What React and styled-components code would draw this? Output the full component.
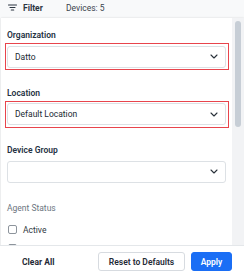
import React from "react";
import styled, { createGlobalStyle } from "styled-components";

const Global = createGlobalStyle`
  html, body { margin: 0; padding: 0; background: #f8f9fa; }
  body { font-family: Roboto, "Liberation Sans", Arial, sans-serif; }
  * { box-sizing: border-box; }
`;

const Root = styled.div`
  width: 244px;
  height: 274px;
  display: flex;
  flex-direction: column;
  overflow: hidden;
  background: #f8f9fa;
`;

const Header = styled.div`
  height: 18px;
  flex: none;
  display: flex;
  align-items: center;
  padding: 0 0 3px 8px;
  color: #2b3440;
  font-size: 8.5px;
`;

const FilterTitle = styled.span`
  display: flex;
  align-items: center;
  gap: 6px;
  font-weight: 700;
  width: 58px;
`;

const Devices = styled.span`
  font-weight: 400;
  color: #3a434d;
`;

const Panel = styled.div`
  flex: 1;
  min-height: 0;
  margin-left: 1px;
  background: #fff;
  box-shadow: 0 0 2px rgba(0, 0, 0, 0.14);
  display: flex;
  flex-direction: column;
`;

const ScrollArea = styled.div`
  flex: 1;
  min-height: 0;
  display: flex;
`;

const Content = styled.div`
  flex: 1;
  overflow: hidden;
  padding: 12px 6px 0 6px;
  display: flex;
  flex-direction: column;
`;

const Track = styled.div`
  width: 12px;
  flex: none;
  background: #f2f3f5;
  padding: 3px 3px 0 3px;
`;

const Thumb = styled.div`
  width: 6px;
  height: 106px;
  border-radius: 3px;
  background: #c7ced6;
`;

const Field = styled.div`
  display: flex;
  flex-direction: column;
  margin-bottom: 20px;
`;

const Label = styled.div`
  font-size: 8.5px;
  line-height: 11px;
  font-weight: 600;
  color: #243142;
  margin-bottom: 4.5px;
`;

const Select = styled.div`
  position: relative;
  height: 22px;
  display: flex;
  align-items: center;
  justify-content: space-between;
  padding: 0 7px 0 7px;
  border: 1px solid #dde1e5;
  border-radius: 3px;
  background: #fff;
  font-size: 8.5px;
  color: #222a33;

  &::after {
    content: "";
    display: ${(p) => (p.$highlight ? "block" : "none")};
    position: absolute;
    inset: -3.5px;
    border: 1.5px solid #e8444c;
    pointer-events: none;
  }
`;

const Section = styled.div`
  font-size: 8.5px;
  line-height: 11px;
  color: #6c7681;
  margin-bottom: 11px;
`;

const CheckRow = styled.label`
  display: flex;
  align-items: center;
  gap: 6px;
  height: 11px;
  margin-bottom: 9px;
  font-size: 8.5px;
  color: #2f3740;
  padding-left: 1px;
`;

const Box = styled.span`
  width: 9px;
  height: 9px;
  border: 1px solid #8d949c;
  border-radius: 2px;
  background: #fff;
`;

const Footer = styled.div`
  height: 29px;
  flex: none;
  display: flex;
  align-items: flex-start;
  padding: 6px 12px 0 0;
  border-top: 1px solid #e4e7ea;
  background: #fff;
  margin-left: -1px;
  gap: 6px;
`;

const TextButton = styled.button`
  margin: 0 auto 0 22px;
  height: 19px;
  padding: 0;
  border: none;
  background: none;
  font-family: inherit;
  font-size: 8.5px;
  font-weight: 700;
  color: #1f2a36;
`;

const Button = styled.button`
  height: 19px;
  width: ${(p) => p.$w}px;
  border-radius: 3px;
  font-family: inherit;
  font-size: 8.5px;
  font-weight: 600;
  padding: 0;
  border: 1px solid ${(p) => (p.$primary ? "#1a6ef5" : "#d7dbe0")};
  background: ${(p) => (p.$primary ? "#1a6ef5" : "#fff")};
  color: ${(p) => (p.$primary ? "#fff" : "#1f2a36")};
`;

const Chevron = () => (
  <svg width="8" height="5" viewBox="0 0 8 5" fill="none">
    <path d="M1 1 L4 4 L7 1" stroke="#2a323b" strokeWidth="1.1" strokeLinecap="round" strokeLinejoin="round" />
  </svg>
);

const FilterIcon = () => (
  <svg width="9" height="7" viewBox="0 0 9 7" fill="none">
    <path d="M0.5 1 H8.5 M2 3.5 H7 M3.3 6 H5.7" stroke="#2b3440" strokeWidth="1.1" strokeLinecap="round" />
  </svg>
);

const SelectField = ({ label, value, highlight }) => (
  <Field>
    <Label>{label}</Label>
    <Select $highlight={highlight}>
      <span>{value}</span>
      <Chevron />
    </Select>
  </Field>
);

export default function App() {
  return (
    <Root>
      <Global />
      <Header>
        <FilterTitle>
          <FilterIcon />
          Filter
        </FilterTitle>
        <Devices>Devices: 5</Devices>
      </Header>
      <Panel>
        <ScrollArea>
          <Content>
            <SelectField label="Organization" value="Datto" highlight />
            <SelectField label="Location" value="Default Location" highlight />
            <SelectField label="Device Group" value="" />
            <Section>Agent Status</Section>
            <CheckRow>
              <Box />
              Active
            </CheckRow>
            <CheckRow>
              <Box />
            </CheckRow>
          </Content>
          <Track>
            <Thumb />
          </Track>
        </ScrollArea>
        <Footer>
          <TextButton>Clear All</TextButton>
          <Button $w={87}>Reset to Defaults</Button>
          <Button $w={41} $primary>Apply</Button>
        </Footer>
      </Panel>
    </Root>
  );
}
